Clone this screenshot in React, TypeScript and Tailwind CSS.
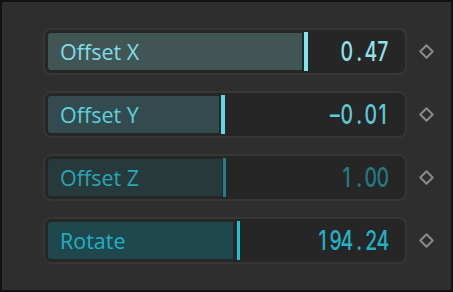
import React from 'react'

interface Param {
  label: string
  value: string
  fill: number
  cursorLeft: number
  cursorWidth: number
  fillColor: string
  labelColor: string
  valueColor: string
  cursorColor: string
}

const params: Param[] = [
  {
    label: 'Offset X',
    value: '0.47',
    fill: 254,
    cursorLeft: 256,
    cursorWidth: 4,
    fillColor: 'bg-[#405554]',
    labelColor: 'text-[#80dee7]',
    valueColor: 'text-[#8fe3ea]',
    cursorColor: 'bg-[#7fe6ef]',
  },
  {
    label: 'Offset Y',
    value: '-0.01',
    fill: 171,
    cursorLeft: 173,
    cursorWidth: 4,
    fillColor: 'bg-[#334b4e]',
    labelColor: 'text-[#5dd0dc]',
    valueColor: 'text-[#5ccbd8]',
    cursorColor: 'bg-[#5ed8e6]',
  },
  {
    label: 'Offset Z',
    value: '1.00',
    fill: 174,
    cursorLeft: 175,
    cursorWidth: 3,
    fillColor: 'bg-[#26393b]',
    labelColor: 'text-[#27a6b6]',
    valueColor: 'text-[#237a84]',
    cursorColor: 'bg-[#247e8a]',
  },
  {
    label: 'Rotate',
    value: '194.24',
    fill: 185,
    cursorLeft: 189,
    cursorWidth: 3,
    fillColor: 'bg-[#1e484e]',
    labelColor: 'text-[#22b0c3]',
    valueColor: 'text-[#20b3c7]',
    cursorColor: 'bg-[#1ec2d8]',
  },
]

function Diamond() {
  return (
    <svg width="15" height="15" viewBox="0 0 15 15" className="shrink-0">
      <path
        d="M7.5 1.3 L13.7 7.5 L7.5 13.7 L1.3 7.5 Z"
        fill="none"
        stroke="#8a8a8a"
        strokeWidth="2"
        strokeLinejoin="round"
      />
    </svg>
  )
}

// fixed-width cells so the value reads like the condensed mono font in the reference
function MonoValue({ text, color }: { text: string; color: string }) {
  return (
    <span
      className={`relative ml-auto mr-[13px] flex text-[27px] font-medium leading-none ${color}`}
      style={{ fontFamily: 'Inter, "Noto Sans", sans-serif' }}
    >
      {text.split('').map((ch, i) => (
        <span key={i} className="w-[12px] flex justify-center">
          <span className="inline-block scale-x-[0.72]">{ch === '-' ? '\u2013' : ch}</span>
        </span>
      ))}
    </span>
  )
}

function ParamRow({ p }: { p: Param }) {
  return (
    <div className="flex items-center gap-[12px]">
      <div className="w-[364px] h-[47px] rounded-[8px] border-2 border-[#363636] bg-[#262626] p-[3px]">
        <div className="relative h-full flex items-center">
          <div
            className={`absolute left-0 top-0 h-full rounded-l-[3px] ${p.fillColor}`}
            style={{ width: p.fill }}
          />
          <div
            className={`absolute -top-px -bottom-px ${p.cursorColor}`}
            style={{ left: p.cursorLeft, width: p.cursorWidth }}
          />
          <span
            className={`relative pl-3 text-[21.5px] leading-none ${p.labelColor}`}
            style={{ fontFamily: '"Open Sans", "Noto Sans", sans-serif' }}
          >
            {p.label}
          </span>
          <MonoValue text={p.value} color={p.valueColor} />
        </div>
      </div>
      <Diamond />
    </div>
  )
}

export default function App() {
  return (
    <div className="w-[453px] h-[292px] border-2 border-[#111111] bg-[#2e2e2e] pl-[41px] pt-[26px]">
      <div className="flex flex-col gap-4">
        {params.map((p) => (
          <ParamRow key={p.label} p={p} />
        ))}
      </div>
    </div>
  )
}
